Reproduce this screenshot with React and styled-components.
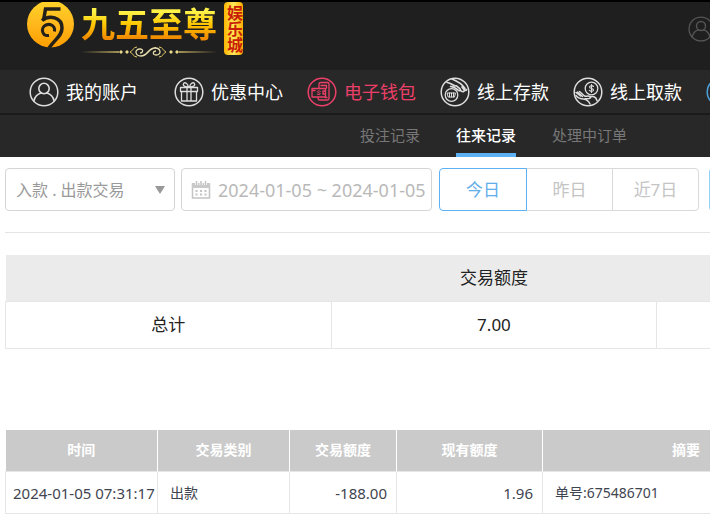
import React from "react";
import styled, { createGlobalStyle } from "styled-components";

const GlobalStyle = createGlobalStyle`
  * { box-sizing: border-box; }
  body {
    margin: 0;
    background: #fff;
    color: #222;
    overflow-x: hidden;
    font-family: "Noto Sans", "Noto Sans CJK SC", sans-serif;
  }
  button, input, select { font-family: inherit; }
`;

const Page = styled.div`
  overflow: hidden;
`;

const TopBar = styled.header`
  display: flex;
  justify-content: space-between;
  align-items: flex-start;
  height: 70px;
  padding-left: 27px;
  border-top: 2px solid #000;
  background: #1f1f1f;
  overflow: hidden;
`;

const Brand = styled.a`
  display: flex;
  text-decoration: none;
`;

const Emblem = styled.svg`
  display: block;
  flex: none;
`;

const Wordmark = styled.div`
  display: flex;
  flex-direction: column;
  gap: 4px;
  margin: 4px 7px 0 6px;
`;

const BrandName = styled.span`
  font-size: 34px;
  line-height: 36px;
  font-weight: 700;
  white-space: nowrap;
  color: transparent;
  background: linear-gradient(#fff34a 15%, #ffc800 50%, #f08a00 90%);
  background-clip: text;
`;

const BrandTag = styled.span`
  writing-mode: vertical-rl;
  display: flex;
  align-items: center;
  justify-content: center;
  width: 19px;
  height: 53px;
  border-radius: 4px;
  background: linear-gradient(90deg, #ffb400, #ffe85a 50%, #ffae00);
  color: #c81e08;
  font-size: 16px;
  line-height: 19px;
  font-weight: 700;
`;

const UserButton = styled.button`
  flex: none;
  margin: 14px -4px 0 0;
  padding: 0;
  border: 0;
  background: none;
  color: #555;
  svg { display: block; }
`;

const MainNav = styled.nav`
  display: flex;
  align-items: center;
  gap: 24px;
  height: 45px;
  padding-left: 29px;
  background: #282828;
  border-bottom: 2px solid #1a1a1a;
`;

const NavLink = styled.a`
  display: flex;
  flex: none;
  align-items: center;
  gap: 7px;
  margin-right: ${(p) => (p.$spaced ? 12 : 0)}px;
  color: ${(p) => p.$color || "#fff"};
  font-size: 18px;
  line-height: 28px;
  text-decoration: none;
  white-space: nowrap;
  svg { color: ${(p) => p.$color || "#dedede"}; }
`;

const SubNav = styled.nav`
  display: flex;
  gap: 36px;
  height: 42px;
  padding-left: 360px;
  background: #282828;
`;

const SubLink = styled.a`
  flex: none;
  padding-top: 7px;
  border-bottom: 4px solid ${(p) => (p.$active ? "#5db1f3" : "transparent")};
  color: ${(p) => (p.$active ? "#fff" : "#777")};
  font-size: 15px;
  line-height: 26px;
  font-weight: ${(p) => (p.$active ? 500 : 400)};
  text-decoration: none;
`;

const Content = styled.main`
  padding-left: 5px;
`;

const FilterBar = styled.form`
  display: flex;
  padding: 11px 0 21px;
  border-bottom: 1px solid #e4e4e4;
`;

const Field = styled.div`
  display: flex;
  align-items: center;
  flex: none;
  height: 43px;
  width: ${(p) => p.$width}px;
  margin-right: ${(p) => p.$gap}px;
  padding: 0 ${(p) => p.$end}px 0 9px;
  border: 1px solid #d5d5d5;
  border-radius: 4px;
  svg { flex: none; display: block; }
`;

const TypeSelect = styled.select`
  appearance: none;
  flex: 1;
  min-width: 0;
  padding: 0 0 0 1px;
  border: 0;
  background: none;
  color: #999;
  font-size: 16px;
  line-height: 26px;
`;

const DateInput = styled.input`
  flex: 1;
  min-width: 0;
  margin-left: 7px;
  padding: 0;
  border: 0;
  background: none;
  color: #b9b9b9;
  font-size: 18px;
  line-height: 26px;
`;

const RangeGroup = styled.div`
  display: flex;
  flex: none;
  margin-right: 10px;
`;

const RangeButton = styled.button`
  width: 87px;
  height: 43px;
  padding: 0;
  margin-left: -1px;
  border: 1px solid ${(p) => (p.$active ? "#5db1f3" : "#d9d9d9")};
  background: #fff;
  color: ${(p) => (p.$active ? "#62aeea" : "#c4c4c4")};
  font-size: 17px;
  line-height: 26px;
  position: relative;
  z-index: ${(p) => (p.$active ? 1 : 0)};
  &:first-child { margin-left: 0; width: 88px; border-radius: 4px 0 0 4px; }
  &:last-child { border-radius: 0 4px 4px 0; }
`;

const SearchButton = styled.button`
  flex: none;
  width: 88px;
  height: 43px;
  border: 1px solid #8fd0fa;
  border-radius: 4px;
  background: #5db1f3;
`;

const SummaryTable = styled.table`
  width: 978px;
  margin-top: 22px;
  table-layout: fixed;
  border-collapse: collapse;
  font-size: 17px;
  line-height: 26px;
  text-align: center;
  th { height: 46px; padding: 0; background: #ebebeb; font-weight: 400; }
  td { height: 47px; padding: 0; border: 1px solid #e6e6e6; }
`;

const RecordTable = styled.table`
  width: 824px;
  margin-top: 81px;
  table-layout: fixed;
  border-collapse: collapse;
  line-height: 22px;
`;

const HeadCell = styled.th`
  width: ${(p) => p.$width}px;
  height: 42px;
  padding: 0;
  background: #cacaca;
  border-right: 1px solid #fff;
  color: #fff;
  font-size: 14px;
  font-weight: 700;
`;

const Cell = styled.td`
  height: 42px;
  padding: 0 ${(p) => (p.$numeric ? 9 : 0)}px 0 ${(p) => (p.$tight ? 7 : 12)}px;
  border: 1px solid #e6e6e6;
  color: #3f4550;
  font-size: ${(p) => (p.$numeric || p.$tight ? 15 : 14)}px;
  text-align: ${(p) => (p.$numeric ? "right" : "left")};
  white-space: nowrap;
`;

const Icon = ({ size = 30, children }) => (
  <svg width={size} height={size} viewBox="0 0 30 30" fill="none" stroke="currentColor" strokeWidth="1.3" strokeLinecap="round" strokeLinejoin="round" aria-hidden="true">
    <circle cx="15" cy="15" r="13.8" strokeWidth="1.5" />
    {children}
  </svg>
);

const UserIcon = ({ size }) => (
  <Icon size={size}>
    <circle cx="15" cy="11.5" r="5.2" strokeWidth="1.6" />
    <path d="M4.8 24c1.2-4.8 4.2-7.2 7.2-8M25.2 24c-1.2-4.8-4.2-7.2-7.2-8" strokeWidth="1.6" />
  </Icon>
);

const GiftIcon = () => (
  <Icon>
    <path d="M6.5 10.5h17v4h-17zM7.5 14.5h15v9.5h-15zM13 10.5V24M17 10.5V24" />
    <path d="M14.5 10c-5 0-6-2.2-4.8-3.7 1.5-1.5 4 .4 4.8 3.7M15.5 10c5 0 6-2.2 4.8-3.7-1.5-1.5-4 .4-4.8 3.7" />
  </Icon>
);

const WalletIcon = () => (
  <Icon>
    <path d="M12 11V7q0-1.500 1.500-1.500h7Q22 5.500 22 7v14.500q0 1.500-1.500 1.500h-8Q11 23 11 20.500M14 8.500h5.500v2.500M18.500 20.500h1.500" />
    <path d="M5 11.500h13.500v8.500H5zM5 13.500h3M18.500 14h-2.500v3h2.500" />
    <path d="M13.300 14.300c-1.200-.9-2.900-.4-2.900.5 0 1.400 2.900.7 2.900 2 0 1.100-2 1.200-3.100.4" strokeWidth="1" />
  </Icon>
);

const DepositIcon = () => (
  <Icon>
    <circle cx="11.500" cy="18" r="6.300" />
    <path d="M7.500 16h8l-1 4h-6zM9.500 16v4M11.500 16v4M13.500 16v4" strokeWidth="1" />
    <path d="M7 5.500c4 0 5.500 3.500 9.500 3.500M12 2c5 2 9.500 4 13 9.500M10.500 9.500c3 .2 5.500 1.800 8 3.800 1.500 1 2.500-.3 1.500-1.500l-3.500-3M20 13c3 3 5.500 1.500 3.500-1M22 10c2 3 4 4.500 4.500 2.500" strokeWidth="1.600" />
  </Icon>
);

const WithdrawIcon = () => (
  <Icon>
    <circle cx="18.500" cy="11.500" r="6.300" />
    <path d="M20.500 9.500c-1.500-1.500-4-.8-4 .5 0 2.100 4 1 4 3 0 1.500-2.700 1.900-4.200.4M18.500 7.500v8" strokeWidth="1.100" />
    <path d="M3 15.500l4.500 3.500M4.500 15l5 4.500M6.500 14.500l5 4.500c1.500.5 3-.2 5 .3 1.500.5 1 2-.3 2.200l-4.200.2M17 20.500c2.500-2 6-1 7 3M3 18.500c2 2.500 4.500 3.500 7.500 3.500 3 .5 5 1.500 6.500 5" strokeWidth="1.500" />
  </Icon>
);

const RecordIcon = () => (
  <Icon>
    <path d="M10 7h10v16H10zM12.500 11h5M12.500 15h5M12.500 19h5" />
  </Icon>
);

const BrandEmblem = () => (
  <Emblem width="48" height="48" viewBox="0 0 48 48" aria-hidden="true">
    <defs>
      <linearGradient id="gold" x1="0" y1="0" x2="0" y2="1">
        <stop offset="0" stopColor="#ffd42a" />
        <stop offset=".5" stopColor="#ffb81c" />
        <stop offset="1" stopColor="#ff9d00" />
      </linearGradient>
    </defs>
    <circle cx="23.500" cy="22" r="23.500" fill="url(#gold)" />
    <g fill="none" stroke="#24201a" strokeWidth="3.500">
      <path d="M33.500 7H18.500L16.500 18.500" />
      <path d="M15 18.500c7-6 20-3.500 20 7.500 0 8-7 11-13 20" />
      <path d="M22 33.500c-7 1-9-8-3-10.500 5-2 9.500 1.500 8.500 6.500" strokeWidth="3" />
    </g>
  </Emblem>
);

const Flourish = () => (
  <svg width="136" height="12" viewBox="0 0 136 12" fill="none" stroke="#e8dfae" aria-hidden="true">
    <path d="M0 6l38-.7v1.400zM136 6l-38-.7v1.400z" fill="#cdb96a" stroke="none" />
    <path d="M38 6l2-2 2 2-2 2zM44 6l2-2 2 2-2 2zM88 6l2-2 2 2-2 2zM94 6l2-2 2 2-2 2z" fill="#e8d88a" stroke="none" />
    <path d="M56 1c-4 0-4 4-7 5 3 1 3 5 7 5M78 1c4 0 4 4 7 5-3 1-3 5-7 5" stroke="#d9c36a" />
    <path d="M75 2c-8-1-8 8-15 8-6 0-7-7-1-7 4 0 3 4 0 4M59 10c8 1 8-8 15-8 6 0 7 7 1 7-4 0-3-4 0-4" strokeWidth="1.300" />
  </svg>
);

const CalendarIcon = () => (
  <svg width="20" height="20" viewBox="0 0 20 20" fill="none" stroke="#c4c4c4" aria-hidden="true">
    <path d="M1.500 4h17v14h-17z" strokeWidth="1.500" />
    <path d="M1 3h18v5H1z" fill="#c9c9c9" stroke="none" />
    <path d="M5.500 1v4M10 1v4M14.500 1v4" stroke="#fff" strokeWidth="3" />
    <path d="M5.500 1v4M10 1v4M14.500 1v4" strokeWidth="1.500" />
    <path d="M4.500 11h11M4.500 14.500h11" strokeWidth="2" strokeDasharray="2 2.500" />
  </svg>
);

const NAV = [
  { label: "我的账户", icon: UserIcon, spaced: true },
  { label: "优惠中心", icon: GiftIcon },
  { label: "电子钱包", icon: WalletIcon, color: "#ed4069" },
  { label: "线上存款", icon: DepositIcon },
  { label: "线上取款", icon: WithdrawIcon },
];

const COLUMNS = [
  ["时间", 152],
  ["交易类别", 132],
  ["交易额度", 107],
  ["现有额度", 146],
  ["摘要", 287],
];

export default function App() {
  return (
    <Page>
      <GlobalStyle />
      <TopBar>
        <Brand href="#">
          <BrandEmblem />
          <Wordmark>
            <BrandName>九五至尊</BrandName>
            <Flourish />
          </Wordmark>
          <BrandTag>娱乐城</BrandTag>
        </Brand>
        <UserButton type="button" aria-label="用户">
          <UserIcon size={26} />
        </UserButton>
      </TopBar>
      <MainNav>
        {NAV.map(({ label, icon: Glyph, color, spaced }) => (
          <NavLink key={label} href="#" $color={color} $spaced={spaced}>
            <Glyph />
            {label}
          </NavLink>
        ))}
        <NavLink href="#" $color="#4b9fda" aria-label="记录">
          <RecordIcon />
        </NavLink>
      </MainNav>
      <SubNav>
        <SubLink href="#">投注记录</SubLink>
        <SubLink href="#" $active aria-current="page">往来记录</SubLink>
        <SubLink href="#">处理中订单</SubLink>
      </SubNav>
      <Content>
        <FilterBar>
          <Field $width={170} $gap={6} $end={9}>
            <TypeSelect aria-label="交易类型">
              <option>入款 . 出款交易</option>
            </TypeSelect>
            <svg width="10" height="8" viewBox="0 0 10 8" aria-hidden="true">
              <path d="M0 0h10L5 8z" fill="#999" />
            </svg>
          </Field>
          <Field $width={251} $gap={7} $end={2}>
            <CalendarIcon />
            <DateInput type="text" aria-label="日期" defaultValue="2024-01-05 ~ 2024-01-05" />
          </Field>
          <RangeGroup>
            <RangeButton type="button" $active>今日</RangeButton>
            <RangeButton type="button">昨日</RangeButton>
            <RangeButton type="button">近7日</RangeButton>
          </RangeGroup>
          <SearchButton type="button" aria-label="查询" />
        </FilterBar>
        <SummaryTable>
          <thead>
            <tr><th /><th scope="col">交易额度</th><th /></tr>
          </thead>
          <tbody>
            <tr><td>总计</td><td>7.00</td><td /></tr>
          </tbody>
        </SummaryTable>
        <RecordTable>
          <thead>
            <tr>
              {COLUMNS.map(([label, width]) => (
                <HeadCell key={label} scope="col" $width={width}>{label}</HeadCell>
              ))}
            </tr>
          </thead>
          <tbody>
            <tr>
              <Cell $tight>2024-01-05 07:31:17</Cell>
              <Cell>出款</Cell>
              <Cell $numeric>-188.00</Cell>
              <Cell $numeric>1.96</Cell>
              <Cell>单号:675486701</Cell>
            </tr>
          </tbody>
        </RecordTable>
      </Content>
    </Page>
  );
}
